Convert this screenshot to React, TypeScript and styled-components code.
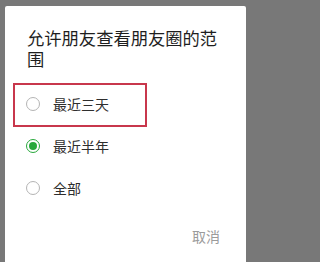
import React from "react";
import styled, { createGlobalStyle } from "styled-components";

const Global = createGlobalStyle`
  html, body { margin: 0; padding: 0; }
  body {
    background: #787878;
    font-family: "Noto Sans CJK SC", "Noto Sans", sans-serif;
    overflow: hidden;
  }
`;

const Screen = styled.div`
  width: 250px;
  height: 262px;
  box-sizing: border-box;
  padding: 6px 4px 0 5px;
  display: flex;
  background: #787878;
`;

const Dialog = styled.div`
  flex: 1;
  background: #ffffff;
  border-radius: 2px 2px 0 0;
  display: flex;
  flex-direction: column;
  padding-top: 21px;
`;

const Title = styled.div`
  padding: 0 24px 0 22px;
  font-size: 17.3px;
  line-height: 21px;
  color: #1e1e1e;
  margin-bottom: 14px;
`;

const Options = styled.div`
  display: flex;
  flex-direction: column;
`;

const Row = styled.div`
  position: relative;
  height: 42px;
  display: flex;
  align-items: center;
  padding-left: 21px;
  gap: 13px;
`;

const Radio = styled.span<{ $checked?: boolean }>`
  width: 14px;
  height: 14px;
  box-sizing: border-box;
  border-radius: 50%;
  border: ${(p) => (p.$checked ? "1.5px solid #27a83b" : "1px solid #b4b4b4")};
  display: flex;
  align-items: center;
  justify-content: center;
  flex-shrink: 0;
  &::after {
    content: "";
    display: ${(p) => (p.$checked ? "block" : "none")};
    width: 8px;
    height: 8px;
    border-radius: 50%;
    background: #27a83b;
  }
`;

const Label = styled.span`
  font-size: 14px;
  line-height: 20px;
  color: #2e2e2e;
`;

const Highlight = styled.div`
  position: absolute;
  left: 8px;
  top: 0;
  width: 134px;
  height: 44px;
  box-sizing: border-box;
  border: 2px solid #c8374c;
  pointer-events: none;
`;

const Footer = styled.div`
  display: flex;
  justify-content: flex-end;
  padding: 17px 26px 0 0;
`;

const Cancel = styled.span`
  font-size: 14px;
  line-height: 20px;
  color: #9b9b9b;
`;

const options = [
  { label: "最近三天", checked: false, highlight: true },
  { label: "最近半年", checked: true, highlight: false },
  { label: "全部", checked: false, highlight: false },
];

export default function App() {
  return (
    <>
      <Global />
      <Screen>
        <Dialog>
          <Title>允许朋友查看朋友圈的范围</Title>
          <Options>
            {options.map((o) => (
              <Row key={o.label}>
                <Radio $checked={o.checked} />
                <Label>{o.label}</Label>
                {o.highlight && <Highlight />}
              </Row>
            ))}
          </Options>
          <Footer>
            <Cancel>取消</Cancel>
          </Footer>
        </Dialog>
      </Screen>
    </>
  );
}
